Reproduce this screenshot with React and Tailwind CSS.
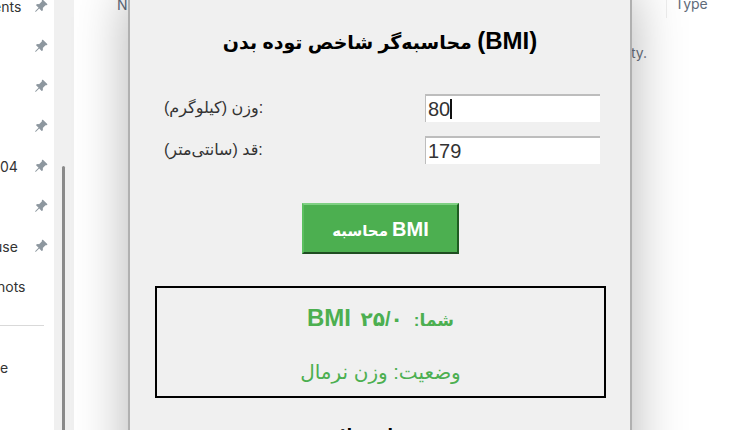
import React from 'react';
import { BsPinAngleFill } from 'react-icons/bs';

const sidebarRows = [
  { text: 'ents', pinned: true, shift: '-ml-[7px]' },
  { text: '', pinned: true },
  { text: '', pinned: true },
  { text: '', pinned: true },
  { text: '04', pinned: true },
  { text: '', pinned: true },
  { text: 'use', pinned: true, shift: '-ml-[6px]' },
  { text: 'hots', pinned: false, shift: '-ml-[3px]' },
];

const Field = ({ label, value, caret }) => (
  <div className="flex items-center justify-between h-7">
    <label className="text-[16px] text-[#333]">{label}</label>
    <div className="relative">
      <input
        readOnly
        value={value}
        className="w-[175px] h-7 bg-white border-t-2 border-l border-[#bdbdbd] pl-[2px] text-[20px] text-[#333] outline-none"
      />
      {caret && <span className="absolute left-[25px] top-[5px] w-[2px] h-[20px] bg-[#111]" />}
    </div>
  </div>
);

const App = () => {
  return (
    <div className="flex w-[750px] h-[430px] overflow-hidden bg-white font-['Liberation_Sans','DejaVu_Sans',sans-serif]">
      {/* pinned folders */}
      <aside className="w-[54px] shrink-0 text-[14px] text-[#333] font-['Inter','Open_Sans',sans-serif]">
        <div className="-mt-[14px]">
          {sidebarRows.map((row, i) => (
            <div key={i} className="flex items-center justify-between h-10 pr-[6px]">
              <span className={`whitespace-nowrap ${row.shift || ''}`}>{row.text}</span>
              {row.pinned && <BsPinAngleFill className="w-[14px] h-[14px] text-[#8d979f]" />}
            </div>
          ))}
        </div>
        <div className="mt-[19px] w-[44px] h-px bg-[#d9d9d9]" />
        <div className="mt-[31px]">e</div>
      </aside>

      {/* scrollbar */}
      <div className="w-5 shrink-0 bg-[#f0f0f0] flex justify-center pt-[166px]">
        <div className="w-[3px] h-full bg-[#8a8a8a] rounded-t-sm -translate-x-[1px]" />
      </div>

      <div className="w-[54px] shrink-0 pl-[43px] -mt-[6px] text-[14px] text-[#5f6b7a] font-['Inter',sans-serif]">N</div>

      {/* dialog */}
      <main className="relative z-10 w-[504px] shrink-0 h-[520px] -mt-[8px] bg-[#f0f0f0] border-x-2 border-[#b0b0b0] shadow-[0_0_50px_rgba(0,0,0,0.3)] px-[24px]">
        <h1 className="mt-[35px] text-center text-[19px] leading-[28px] font-bold text-black">
          محاسبه‌گر شاخص توده بدن <span className="text-[24px]">(BMI)</span>
        </h1>
        <div className="mt-[37px] ml-[10px] mr-[6px] flex flex-col gap-[14px]">
          <Field label="وزن (کیلوگرم):" value="80" caret />
          <Field label="قد (سانتی‌متر):" value="179" />
        </div>
        <div className="mt-[39px] flex justify-center">
          <button className="w-[157px] h-[51px] ml-px bg-[#4caf50] border-2 border-t-[#7fd083] border-l-[#5cbf60] border-r-[#1f5c22] border-b-[#1f4d22] text-white text-[15px] font-bold">
            محاسبه <span className="text-[20px]">BMI</span>
          </button>
        </div>
        <div className="mt-[32px] ml-px h-[112px] border-2 border-black text-[#4caf50] text-center">
          <p className="mt-[15px] text-[20px] leading-[30px] font-bold whitespace-pre">
            <span className="text-[24px] mr-1">BMI</span> <span className="text-[17px]">شما:</span>  <span>۲۵/۰</span>
          </p>
          <p className="mt-[23px] text-[20px] leading-[26px]">وضعیت: وزن نرمال</p>
        </div>
        <p className="mt-[25px] text-center text-[16px] font-bold text-black">توصیه‌های سلامتی</p>
      </main>

      {/* page behind the dialog */}
      <div className="flex-1 min-w-0 text-[14px] text-[#5f6b7a] font-['Inter',sans-serif]">
        <div className="ml-[34px] h-[18px] pl-[8px] border-l border-[#eeeeee] leading-[8px]">Type</div>
        <div className="mt-[24px] -ml-[1px] text-[#6b7280]">ty.</div>
      </div>
    </div>
  );
};

export default App;
